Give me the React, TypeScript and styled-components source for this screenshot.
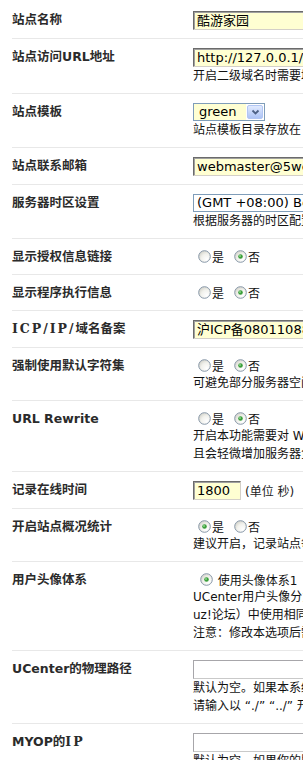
import styled, {createGlobalStyle} from "styled-components";
import {FC, ReactNode, useId} from "react";

const GlobalStyle = createGlobalStyle`
    html, body {
        margin: 0;
        padding: 0;
        overflow: hidden;
        background: #fff;
    }
    body {
        font-family: "DejaVu Sans", "Noto Sans CJK SC", sans-serif;
        font-size: 12px;
        color: #222;
    }
`

const Table = styled.div`
    padding: 2px 0 0 12px;
    width: 291px;
`

const Row = styled.div`
    display: grid;
    grid-template-columns: 181px 1fr;
    padding: 9px 0 8px;
    border-bottom: 1px solid #e8e8e8;
`

const Label = styled.div`
    font-weight: bold;
    font-size: 12.5px;
    line-height: 18px;
    color: #2b2b2b;
    white-space: nowrap;
`

const Serif = styled.span`
    font-family: "DejaVu Serif", "Noto Sans CJK SC", serif;
    letter-spacing: 2px;
`

const Cell = styled.div`
    min-width: 0;
    white-space: nowrap;
`

const TextBox = styled.div<{ $tone?: "yellow" | "white"; $width?: number }>`
    box-sizing: border-box;
    height: 19px;
    width: ${p => p.$width ?? 260}px;
    padding: 0 3px;
    font-size: 13px;
    line-height: 17px;
    color: #000;
    background: ${p => p.$tone === "white" ? "#fff" : "#ffffd2"};
    border: 1px solid;
    border-color: ${p => p.$tone === "white"
        ? "#a7a6aa #c9c9c9 #c9c9c9 #a7a6aa"
        : "#6b6b6b #d4d0c8 #d4d0c8 #6b6b6b"};
    box-shadow: ${p => p.$tone === "white" ? "none" : "inset 1px 1px 0 #a0a0a0"};
    overflow: hidden;
`

const Hint = styled.div`
    line-height: 18px;
    font-size: 12px;
    color: #111;
`

const InlineRow = styled.div`
    display: flex;
    align-items: center;
    height: 19px;
`

const Unit = styled.span`
    margin-left: 4px;
    color: #222;
`

const Select = styled.div<{ $width?: number }>`
    box-sizing: border-box;
    display: flex;
    align-items: stretch;
    height: 18px;
    width: ${p => p.$width ?? 72}px;
    border: 1px solid #7f9db9;
    background: #fff;
    font-size: 13px;
    color: #000;
    overflow: hidden;
`

const SelectValue = styled.div<{ $tone?: "yellow" | "white" }>`
    flex: 1;
    padding-left: ${p => p.$tone === "yellow" ? 5 : 3}px;
    line-height: 16px;
    background: ${p => p.$tone === "yellow" ? "#ffffd2" : "#fff"};
`

const ArrowButton = styled.div`
    width: 16px;
    margin: 1px;
    box-sizing: border-box;
    border: 1px solid #b2c6f4;
    border-radius: 2px;
    background: linear-gradient(#e1eafe, #adc4f6);
    display: flex;
    align-items: center;
    justify-content: center;
`

const RadioLine = styled.div<{ $indent?: number }>`
    display: flex;
    align-items: center;
    height: 17px;
    padding-left: ${p => p.$indent ?? 0}px;
`

const RadioMark = styled.svg`
    flex-shrink: 0;
    margin: 0 1px 0 5px;
`

const OptionText = styled.span`
    margin-right: 5px;
    color: #111;
`

const Radio: FC<{ checked?: boolean }> = ({checked}) => {
    const id = useId().replace(/:/g, "");
    return <RadioMark width={13} height={13} viewBox="0 0 13 13">
        <defs>
            <radialGradient id={`g${id}`} cx="0.7" cy="0.75" r="0.8">
                <stop offset="0" stopColor="#ffffff"/>
                <stop offset="0.6" stopColor="#f1f1ec"/>
                <stop offset="1" stopColor="#d4d4cc"/>
            </radialGradient>
        </defs>
        <circle cx={6.5} cy={6.5} r={5.8} fill={`url(#g${id})`} stroke="#8797a8" strokeWidth={1}/>
        {checked && <circle cx={6.5} cy={6.5} r={2.3} fill="#3a9e3a"/>}
        {checked && <circle cx={6} cy={6} r={0.9} fill="#8fd98f"/>}
    </RadioMark>
}

const YesNo: FC<{ yes?: boolean }> = ({yes}) => (<RadioLine>
    <Radio checked={yes}/><OptionText>是</OptionText>
    <Radio checked={!yes}/><OptionText>否</OptionText>
</RadioLine>)

const Chevron = () => (<svg width={9} height={7} viewBox="0 0 9 7">
    <path d="M1.5 1.5 L4.5 4.5 L7.5 1.5" fill="none" stroke="#4d6185" strokeWidth={1.8}/>
</svg>)

const Field: FC<{ label: ReactNode; children: ReactNode }> = ({label, children}) => (<Row>
    <Label>{label}</Label>
    <Cell>{children}</Cell>
</Row>)

export default function App() {
    return <>
        <GlobalStyle/>
        <Table>
            <Field label="站点名称">
                <TextBox>酷游家园</TextBox>
            </Field>
            <Field label="站点访问URL地址">
                <TextBox>http://127.0.0.1/uchome/</TextBox>
                <Hint>开启二级域名时需要填写完整的站点地址</Hint>
            </Field>
            <Field label="站点模板">
                <Select>
                    <SelectValue $tone="yellow">green</SelectValue>
                    <ArrowButton><Chevron/></ArrowButton>
                </Select>
                <Hint>站点模板目录存放在 ./template/ 下</Hint>
            </Field>
            <Field label="站点联系邮箱">
                <TextBox>webmaster@5weiyu.com</TextBox>
            </Field>
            <Field label="服务器时区设置">
                <Select $width={260}>
                    <SelectValue>(GMT +08:00) Beijing, Hong Kong</SelectValue>
                </Select>
                <Hint>根据服务器的时区配置进行选择</Hint>
            </Field>
            <Field label="显示授权信息链接">
                <YesNo/>
            </Field>
            <Field label="显示程序执行信息">
                <YesNo/>
            </Field>
            <Field label={<><Serif>ICP/IP/</Serif>域名备案</>}>
                <TextBox>沪ICP备08011088号</TextBox>
            </Field>
            <Field label="强制使用默认字符集">
                <YesNo/>
                <Hint>可避免部分服务器空间页面出现乱码</Hint>
            </Field>
            <Field label="URL Rewrite">
                <YesNo/>
                <Hint>开启本功能需要对 Web 服务器增加相应的规则支持</Hint>
                <Hint>且会轻微增加服务器负担</Hint>
            </Field>
            <Field label="记录在线时间">
                <InlineRow>
                    <TextBox $width={48}>1800</TextBox>
                    <Unit>(单位 秒)</Unit>
                </InlineRow>
            </Field>
            <Field label="开启站点概况统计">
                <YesNo yes/>
                <Hint>建议开启，记录站点每日的数据</Hint>
            </Field>
            <Field label="用户头像体系">
                <RadioLine $indent={2}>
                    <Radio checked/><OptionText>&nbsp;使用头像体系1</OptionText>
                    <Radio/><OptionText>&nbsp;使用头像体系2</OptionText>
                </RadioLine>
                <Hint>UCenter用户头像分为两种</Hint>
                <Hint>uz!论坛）中使用相同的头像</Hint>
                <Hint>注意：修改本选项后需要更新缓存</Hint>
            </Field>
            <Field label="UCenter的物理路径">
                <TextBox $tone="white"/>
                <Hint>默认为空。如果本系统与UCenter安装在同一台服务器</Hint>
                <Hint>请输入以 “./” “../” 开头的相对路径</Hint>
            </Field>
            <Field label={<>MYOP的<Serif>IP</Serif></>}>
                <TextBox $tone="white"/>
                <Hint>默认为空。如果你的服务器有多个IP</Hint>
            </Field>
        </Table>
    </>
}
